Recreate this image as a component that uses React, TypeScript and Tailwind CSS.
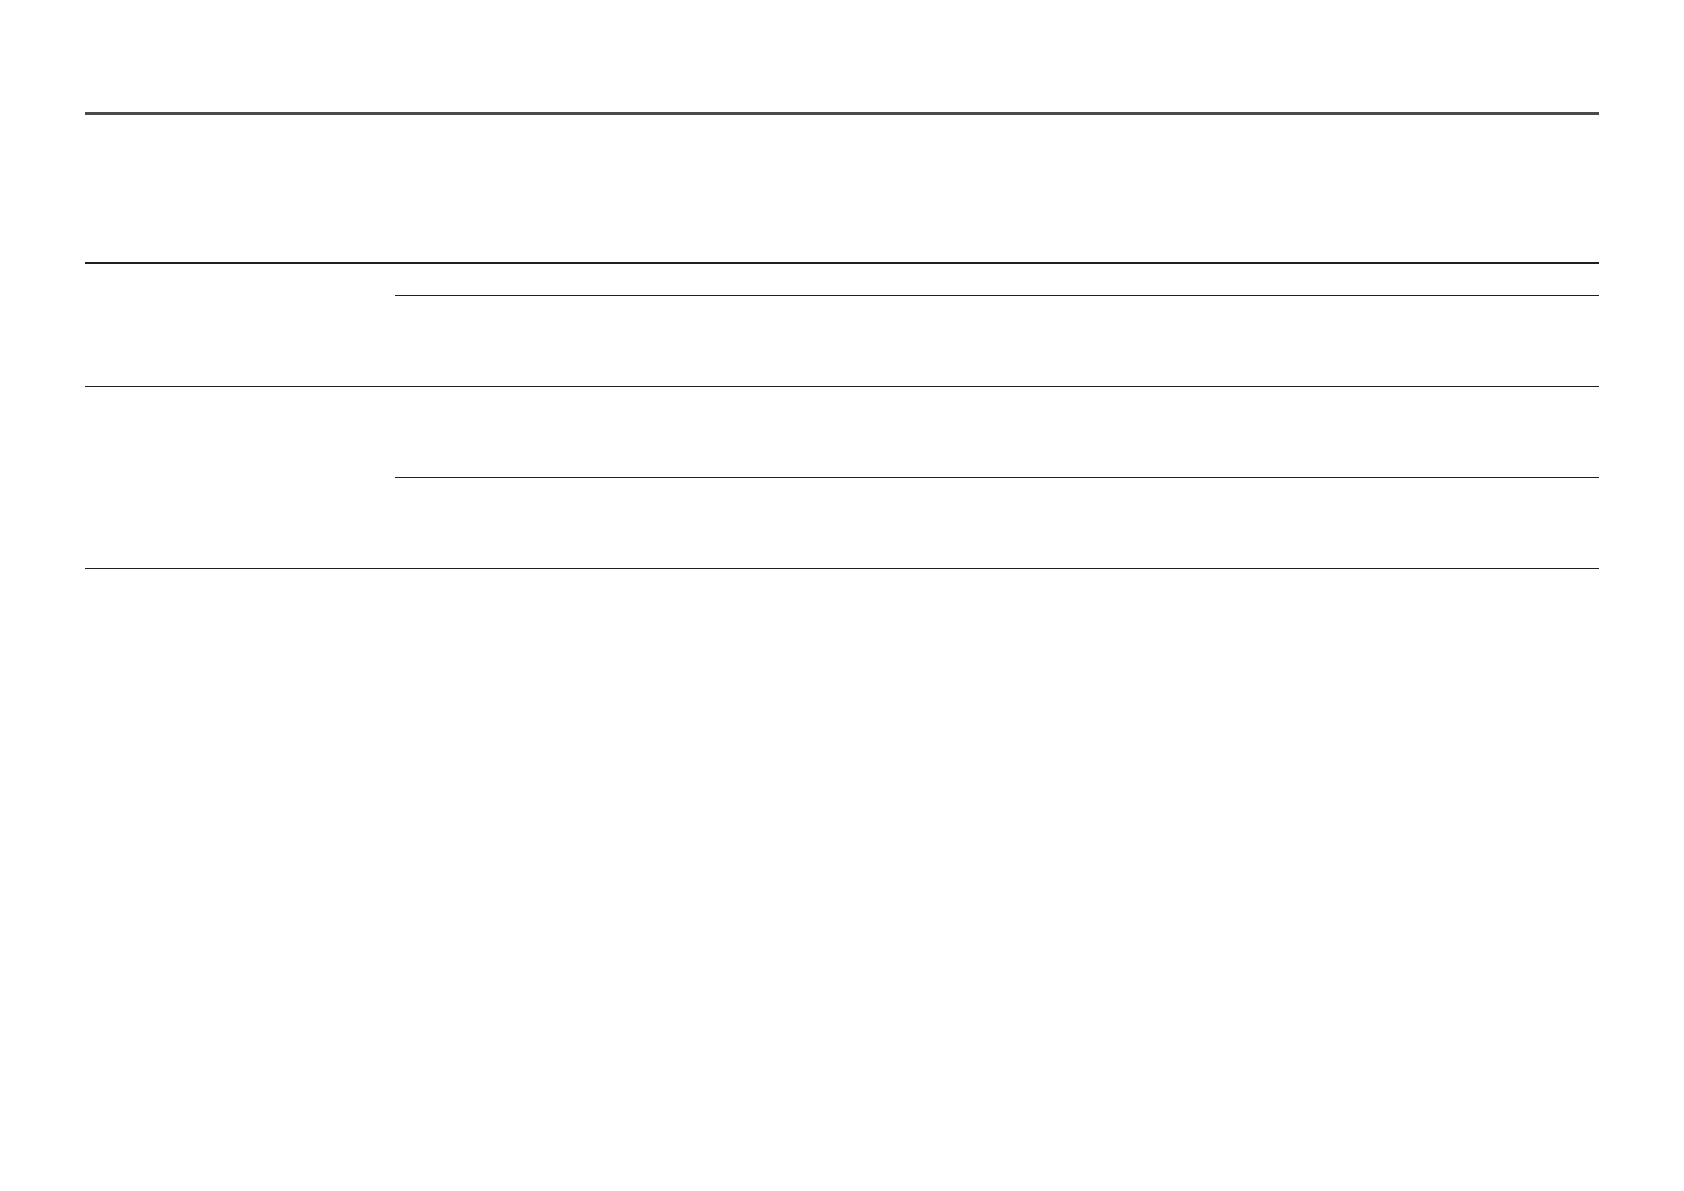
import React from 'react';

// row heights include their bottom border (border-box)
const groups = [
  { rows: [32, 90] },
  { rows: [91, 90] },
];

const App = () => {
  return (
    <div className="min-h-[1191px] w-full bg-white pl-[85px] pt-[112px] font-['Liberation_Sans',sans-serif]">
      <div className="w-[1514px]">
        {/* Header */}
        <div className="h-[152px] border-t-[3px] border-b-2 border-t-[#4b4b4b] border-b-[#231f20]" />

        {/* Body groups */}
        {groups.map((g, gi) => (
          <div key={gi} className="flex border-b border-[#231f20]">
            <div className="w-[310px] shrink-0" />
            <div className="flex flex-1 flex-col">
              {g.rows.map((h, ri) => (
                <div
                  key={ri}
                  className={ri < g.rows.length - 1 ? 'border-b border-[#231f20]' : ''}
                  style={{ height: h }}
                />
              ))}
            </div>
          </div>
        ))}
      </div>
    </div>
  );
};

export default App;
